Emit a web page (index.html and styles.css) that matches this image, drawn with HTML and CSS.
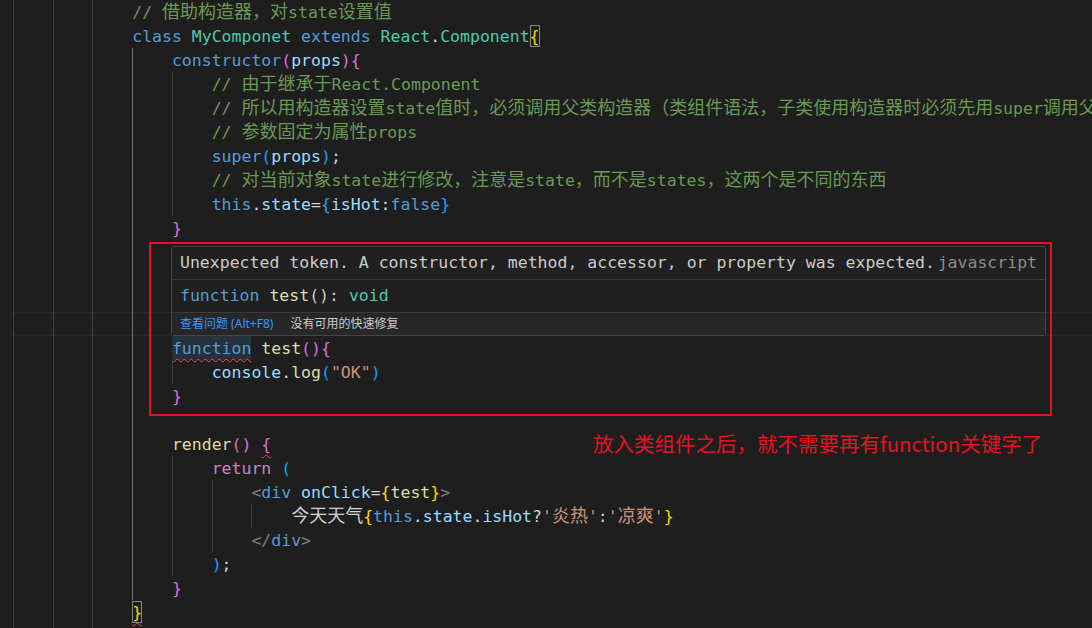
FILE: index.html
```html
<!DOCTYPE html>
<html>

<head>
  <title>MyComponet.jsx</title>
  <link rel="stylesheet" href="styles.css">
</head>

<body>
  <div class="editor">
    <div class="line"><span class="g"></span><span class="g"></span><span class="g"></span><span class="cm">// <span class="cj">借助构造器，对</span>state<span class="cj">设置值</span></span></div>
    <div class="line"><span class="g"></span><span class="g"></span><span class="g"></span><span class="kw">class</span> <span class="cls">MyComponet</span> <span class="kw">extends</span> <span class="cls">React</span>.<span class="cls">Component</span><span class="b1 match">{</span></div>
    <div class="line"><span class="g"></span><span class="g"></span><span class="g"></span><span class="g on"></span><span class="kw">constructor</span><span class="b2">(</span><span class="var">props</span><span class="b2">){</span></div>
    <div class="line"><span class="g"></span><span class="g"></span><span class="g"></span><span class="g on"></span><span class="g"></span><span class="cm">// <span class="cj">由于继承于</span>React.Component</span></div>
    <div class="line"><span class="g"></span><span class="g"></span><span class="g"></span><span class="g on"></span><span class="g"></span><span class="cm">// <span class="cj">所以用构造器设置</span>state<span class="cj">值时，必须调用父类构造器（类组件语法，子类使用构造器时必须先用</span>super<span class="cj">调用父</span></span></div>
    <div class="line"><span class="g"></span><span class="g"></span><span class="g"></span><span class="g on"></span><span class="g"></span><span class="cm">// <span class="cj">参数固定为属性</span>props</span></div>
    <div class="line"><span class="g"></span><span class="g"></span><span class="g"></span><span class="g on"></span><span class="g"></span><span class="kw">super</span><span class="b3">(</span><span class="var">props</span><span class="b3">)</span>;</div>
    <div class="line"><span class="g"></span><span class="g"></span><span class="g"></span><span class="g on"></span><span class="g"></span><span class="cm">// <span class="cj">对当前对象</span>state<span class="cj">进行修改，注意是</span>state<span class="cj">，而不是</span>states<span class="cj">，这两个是不同的东西</span></span></div>
    <div class="line"><span class="g"></span><span class="g"></span><span class="g"></span><span class="g on"></span><span class="g"></span><span class="kw">this</span>.<span class="var">state</span>=<span class="b3">{</span><span class="var">isHot</span>:<span class="kw">false</span><span class="b3">}</span></div>
    <div class="line"><span class="g"></span><span class="g"></span><span class="g"></span><span class="g on"></span><span class="b2">}</span></div>
    <div class="line"><span class="g"></span><span class="g"></span><span class="g"></span><span class="g on"></span></div>
    <div class="line"><span class="g"></span><span class="g"></span><span class="g"></span><span class="g on"></span></div>
    <div class="line"><span class="g"></span><span class="g"></span><span class="g"></span><span class="g on"></span></div>
    <div class="line cur"><span class="g"></span><span class="g"></span><span class="g"></span><span class="g on"></span></div>
    <div class="line"><span class="g"></span><span class="g"></span><span class="g"></span><span class="g on"></span><span class="kw word err">function</span> <span class="fn">test</span><span class="b2">(){</span></div>
    <div class="line"><span class="g"></span><span class="g"></span><span class="g"></span><span class="g on"></span><span class="g"></span><span class="var">console</span>.<span class="fn">log</span><span class="b3">(</span><span class="str">"OK"</span><span class="b3">)</span></div>
    <div class="line"><span class="g"></span><span class="g"></span><span class="g"></span><span class="g on"></span><span class="b2">}</span></div>
    <div class="line"><span class="g"></span><span class="g"></span><span class="g"></span><span class="g on"></span></div>
    <div class="line"><span class="g"></span><span class="g"></span><span class="g"></span><span class="g on"></span><span class="fn">render</span><span class="b2">()</span> <span class="b2 err">{</span></div>
    <div class="line"><span class="g"></span><span class="g"></span><span class="g"></span><span class="g on"></span><span class="g"></span><span class="ctl">return</span> <span class="b3">(</span></div>
    <div class="line"><span class="g"></span><span class="g"></span><span class="g"></span><span class="g on"></span><span class="g"></span><span class="g"></span><span class="tag">&lt;</span><span class="kw">div</span> <span class="var">onClick</span>=<span class="b1">{</span><span class="fn">test</span><span class="b1">}</span><span class="tag">&gt;</span></div>
    <div class="line"><span class="g"></span><span class="g"></span><span class="g"></span><span class="g on"></span><span class="g"></span><span class="g"></span><span class="g"></span><span class="cj">今天天气</span><span class="b1">{</span><span class="kw">this</span>.<span class="var">state</span>.<span class="var">isHot</span>?<span class="str">'<span class="cj">炎热</span>'</span>:<span class="str">'<span class="cj">凉爽</span>'</span><span class="b1">}</span></div>
    <div class="line"><span class="g"></span><span class="g"></span><span class="g"></span><span class="g on"></span><span class="g"></span><span class="g"></span><span class="tag">&lt;/</span><span class="kw">div</span><span class="tag">&gt;</span></div>
    <div class="line"><span class="g"></span><span class="g"></span><span class="g"></span><span class="g on"></span><span class="g"></span><span class="b3">)</span>;</div>
    <div class="line"><span class="g"></span><span class="g"></span><span class="g"></span><span class="g on"></span><span class="b2">}</span></div>
    <div class="line"><span class="g"></span><span class="g"></span><span class="g"></span><span class="b1 match err">}</span></div>
    <div class="line"><span class="g"></span><span class="g"></span><span class="g"></span></div>

    <div class="hover">
      <div class="hover-row hover-title">
        <span>Unexpected token. A constructor, method, accessor, or property was expected.</span>
        <span class="source">javascript</span>
      </div>
      <div class="hover-row"><span class="kw">function</span> <span class="fn">test</span>(): <span class="cls">void</span></div>
      <div class="hover-status">
        <span class="link">查看问题 (Alt+F8)</span>
        <span>没有可用的快速修复</span>
      </div>
    </div>

    <div class="mark"></div>
    <div class="note">放入类组件之后，就不需要再有function关键字了</div>
  </div>
</body>

</html>
```

FILE: styles.css
```css
body {
  margin: 0;
  background-color: #1e1e1e;
}

.editor {
  position: relative;
  height: 628px;
  overflow: hidden;
  padding-left: 13px;
  background-color: #1e1e1e;
  color: #d4d4d4;
  font-family: "DejaVu Sans Mono", monospace;
  font-size: 16.5px;
}

.line {
  height: 24px;
  line-height: 25px;
  white-space: pre;
}

.line.cur {
  box-shadow: inset 0 2px #282828, inset 0 -2px #282828;
}

.g {
  display: inline-block;
  width: 4ch;
  height: 24px;
  vertical-align: top;
  box-shadow: inset 1px 0 #404040;
}

.g.on {
  box-shadow: inset 1px 0 #707070;
}

.cj {
  font-family: "Noto Sans CJK SC", sans-serif;
  font-size: 18px;
  line-height: 18px;
}

.kw { color: #569cd6; }
.cls { color: #4ec9b0; }
.fn { color: #dcdcaa; }
.var { color: #9cdcfe; }
.str { color: #ce9178; }
.cm { color: #6a9955; }
.ctl { color: #c586c0; }
.tag { color: #808080; }
.b1 { color: #ffd700; }
.b2 { color: #da70d6; }
.b3 { color: #179fff; }

.match {
  display: inline-block;
  height: 22px;
  line-height: 23px;
  margin-top: 1px;
  vertical-align: top;
  box-shadow: inset 0 0 0 1px #888;
}

.word {
  display: inline-block;
  height: 24px;
  vertical-align: top;
  background-color: #25313c;
}

.err {
  text-decoration: underline wavy #f14c4c;
  text-decoration-thickness: 1px;
  text-underline-offset: 4px;
}

.hover {
  position: absolute;
  left: 171px;
  top: 246px;
  width: 873px;
  border: 1px solid #454545;
  border-radius: 3px;
  background-color: #202020;
  color: #cccccc;
}

.hover-row {
  height: 32px;
  line-height: 32px;
  padding: 0 8px;
  border-bottom: 1px solid #3a3a3a;
  white-space: pre;
}

.hover-title {
  display: flex;
  justify-content: space-between;
}

.source {
  color: #8b8b8b;
}

.hover-status {
  display: flex;
  gap: 17px;
  height: 22px;
  line-height: 22px;
  padding: 0 8px;
  background-color: #272727;
  font-family: "Noto Sans", "Noto Sans CJK SC", sans-serif;
  font-size: 12px;
}

.link {
  color: #3794ff;
}

.mark {
  position: absolute;
  left: 149px;
  top: 242px;
  width: 899px;
  height: 170px;
  border: 2px solid #e81123;
}

.note {
  position: absolute;
  left: 593px;
  top: 431px;
  line-height: 24px;
  color: #e81123;
  font-family: "Noto Sans CJK SC", sans-serif;
  font-size: 20.5px;
}
```
